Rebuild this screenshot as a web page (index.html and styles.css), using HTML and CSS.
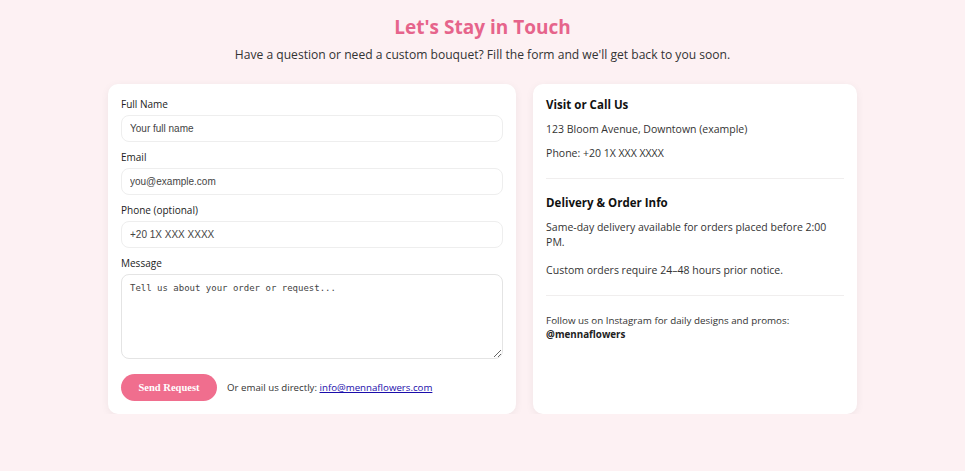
FILE: index.html
```html
<!DOCTYPE html>
<html>
<head>
    <title>Contact - Menna Flowers</title>
    <link rel="stylesheet" href="styles.css">
</head>
<body>
    <section class="contact">
        <h1 class="contact-title">Let's Stay in Touch</h1>
        <p class="contact-lead">Have a question or need a custom bouquet? Fill the form and we'll get back to you soon.</p>

        <div class="contact-grid">
            <form class="card contact-form">
                <label for="name">Full Name</label>
                <input id="name" type="text" placeholder="Your full name">

                <label for="email">Email</label>
                <input id="email" type="email" placeholder="you@example.com">

                <label for="phone">Phone (optional)</label>
                <input id="phone" type="tel" placeholder="+20 1X XXX XXXX">

                <label for="message">Message</label>
                <textarea id="message" placeholder="Tell us about your order or request..."></textarea>

                <div class="form-actions">
                    <button type="button" class="send-button">Send Request</button>
                    <span class="alt-contact">Or email us directly: <a href="mailto:info@mennaflowers.com">info@mennaflowers.com</a></span>
                </div>
            </form>

            <aside class="card contact-info">
                <div class="info-block">
                    <h3>Visit or Call Us</h3>
                    <p>123 Bloom Avenue, Downtown (example)</p>
                    <p>Phone: +20 1X XXX XXXX</p>
                </div>
                <div class="info-block">
                    <h3>Delivery &amp; Order Info</h3>
                    <p>Same-day delivery available for orders placed before 2:00 PM.</p>
                    <p>Custom orders require 24–48 hours prior notice.</p>
                </div>
                <div class="info-block">
                    <p class="social">Follow us on Instagram for daily designs and promos:<br><strong>@mennaflowers</strong></p>
                </div>
            </aside>
        </div>
    </section>
</body>
</html>
```

FILE: styles.css
```css
body {
    margin: 0;
    padding: 0;
    background-color: #fdf1f3;
    color: #333;
    font-family: 'Open Sans', 'Noto Sans', sans-serif;
}

.contact {
    padding-top: 14px;
}

.contact-title {
    margin: 0;
    text-align: center;
    font-size: 19px;
    line-height: 26px;
    font-weight: 700;
    color: #e6648b;
}

.contact-lead {
    margin: 7px 0 0;
    text-align: center;
    font-size: 12.1px;
    line-height: 16px;
}

.contact-grid {
    display: grid;
    grid-template-columns: 1.26fr 1fr;
    gap: 17px;
    max-width: 749px;
    margin: 21px auto 0;
}

.card {
    background-color: #fff;
    border-radius: 10px;
    box-shadow: 0 2px 8px rgba(0, 0, 0, 0.06);
    padding: 13px;
}

/* form */
.contact-form {
    display: flex;
    flex-direction: column;
}

.contact-form label {
    font-size: 10px;
    line-height: 12px;
    color: #222;
    padding-top: 1px;
    margin-bottom: 5px;
}

.contact-form input,
.contact-form textarea {
    box-sizing: border-box;
    width: 100%;
    border: 1px solid #eee;
    border-radius: 8px;
    padding: 0 8px;
    margin-bottom: 8px;
    color: #333;
    outline: none;
}

.contact-form input {
    height: 27px;
    font-family: 'Liberation Sans', Arial, sans-serif;
    font-size: 10px;
}

.contact-form textarea {
    height: 85px;
    padding-top: 8px;
    border-color: #e4e4e4;
    font-family: 'DejaVu Sans Mono', monospace;
    font-size: 9px;
    resize: vertical;
}

.contact-form ::placeholder {
    color: #444;
}

.form-actions {
    display: flex;
    align-items: center;
    gap: 10px;
    margin-top: 7px;
}

.send-button {
    width: 96px;
    height: 27px;
    border: none;
    border-radius: 14px;
    background-color: #f06e8e;
    color: #fff;
    font-family: 'Liberation Serif', 'Times New Roman', serif;
    font-weight: 700;
    font-size: 10.5px;
}

.alt-contact {
    font-size: 9.7px;
    color: #333;
}

.alt-contact a {
    color: #1a0dab;
}

/* info */
.contact-info {
    padding-top: 14px;
}

.info-block {
    padding-bottom: 17px;
    margin-bottom: 17px;
    border-bottom: 1px solid #f0eeee;
}

.info-block:last-child {
    border-bottom: none;
    margin-bottom: 0;
    padding-top: 1px;
}

.info-block h3 {
    margin: 0 0 10px;
    font-size: 11.5px;
    line-height: 14px;
    color: #111;
}

.info-block p {
    margin: 0 0 13px;
    font-size: 10.5px;
    line-height: 15px;
}

.info-block:first-child p {
    margin-bottom: 9px;
}

.info-block p:last-child {
    margin-bottom: 0;
}

.social {
    font-size: 9.8px !important;
    line-height: 14px !important;
}

.social strong {
    color: #222;
}
```
